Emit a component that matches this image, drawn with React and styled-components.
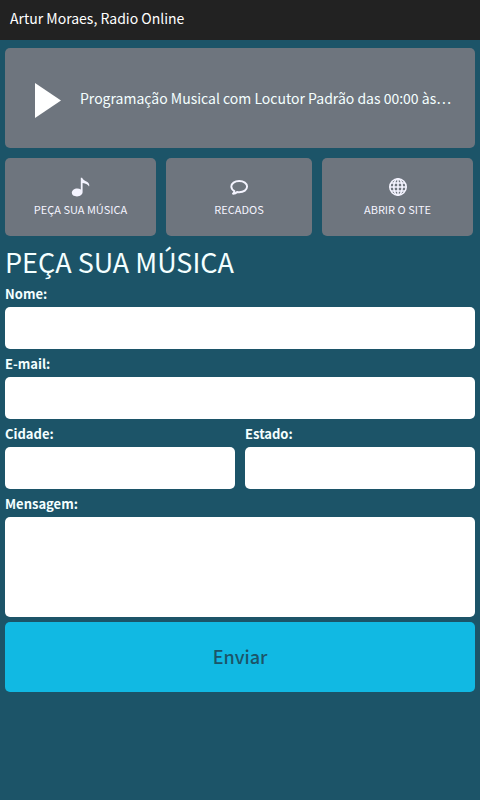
import React, { useState } from 'react';
import styled, { createGlobalStyle } from 'styled-components';

const App = () => {
  const [playing, setPlaying] = useState(false);

  return (
    <>
      <GlobalStyle />
      <TopBar>Artur Moraes, Radio Online</TopBar>
      <Main>
        <Player>
          <PlayButton
            type="button"
            aria-label={playing ? 'Pausar' : 'Tocar'}
            onClick={() => setPlaying(!playing)}
          >
            <svg width="26" height="35" viewBox="0 0 26 35" fill="currentColor">
              {playing ? <path d="M0 0h9v35H0zM17 0h9v35h-9z" /> : <path d="M0 0 26 17.500 0 35z" />}
            </svg>
          </PlayButton>
          <Program>Programação Musical com Locutor Padrão das 00:00 às…</Program>
        </Player>

        <Menu>
          <MenuLink href="#pedido">
            <NoteIcon />
            PEÇA SUA MÚSICA
          </MenuLink>
          <MenuLink href="#recados">
            <BubbleIcon />
            RECADOS
          </MenuLink>
          <MenuLink href="#site">
            <GlobeIcon />
            ABRIR O SITE
          </MenuLink>
        </Menu>

        <Title id="pedido">PEÇA SUA MÚSICA</Title>
        <Form onSubmit={(e) => e.preventDefault()}>
          <Field>
            <Label htmlFor="nome">Nome:</Label>
            <Input id="nome" type="text" />
          </Field>
          <Field>
            <Label htmlFor="email">E-mail:</Label>
            <Input id="email" type="email" />
          </Field>
          <Row>
            <Field>
              <Label htmlFor="cidade">Cidade:</Label>
              <Input id="cidade" type="text" />
            </Field>
            <Field>
              <Label htmlFor="estado">Estado:</Label>
              <Input id="estado" type="text" />
            </Field>
          </Row>
          <Field>
            <Label htmlFor="mensagem">Mensagem:</Label>
            <TextArea id="mensagem" />
          </Field>
          <Submit type="submit">Enviar</Submit>
        </Form>
      </Main>
    </>
  );
};

export default App;

const NoteIcon = () => (
  <Icon viewBox="0 0 20 20" aria-hidden="true">
    <path
      fill="currentColor"
      d="M9.800.8h1.300c.6 1.600 2 2.500 3.800 3.400 2.200 1.100 3.500 2.300 3.400 4.300 0 .4-.1.800-.3 1.100-.8-1.800-3-3.100-6.400-3.500V15c0 2.400-2.500 4.400-5.600 4.400C2.700 19.400.8 18 .8 15.800c0-2.300 2.300-4.300 5.500-4.300 1.400 0 2.600.3 3.500.9z"
    />
  </Icon>
);

const BubbleIcon = () => (
  <Icon viewBox="0 0 20 20" aria-hidden="true">
    <path
      fill="none"
      stroke="currentColor"
      strokeWidth="1.900"
      strokeLinejoin="round"
      d="M10.200 4C5.700 4 2.300 6.400 2.300 9.600c0 1.900 1.200 3.500 3.100 4.500 0 1.100-.6 1.800-1.400 2.600 1.900-.1 3.200-.7 4.100-1.700.7.100 1.400.2 2.100.2 4.500 0 7.900-2.400 7.900-5.600S14.700 4 10.200 4z"
    />
  </Icon>
);

const GlobeIcon = () => (
  <Icon viewBox="0 0 20 20" aria-hidden="true">
    <g fill="none" stroke="currentColor" strokeWidth="1.600">
      <circle cx="10" cy="10" r="8.200" />
      <ellipse cx="10" cy="10" rx="4.200" ry="8.200" />
      <path d="M10 1.800v16.400M1.800 10h16.400M3 6h14M3 14h14" />
    </g>
  </Icon>
);

const GlobalStyle = createGlobalStyle`
  * {
    box-sizing: border-box;
  }

  body {
    margin: 0;
    background: #1c5468;
    color: #f4ffff;
    font-family: 'Noto Sans CJK KR', 'Noto Sans', sans-serif;
  }
`;

const TopBar = styled.header`
  padding: 8px 10px 12px;
  background: #222;
  color: #fff;
  font-size: 14px;
  line-height: 20px;
`;

const Main = styled.main`
  padding: 8px 5px;
`;

const Player = styled.section`
  display: flex;
  align-items: center;
  min-height: 100px;
  padding: 0 10px 0 25px;
  border-radius: 5px;
  background: #6e757e;
`;

const PlayButton = styled.button`
  display: flex;
  flex: none;
  padding: 5px 14px 0 5px;
  border: 0;
  background: none;
  color: #fff;
  cursor: pointer;
`;

const Program = styled.p`
  flex: 1;
  min-width: 0;
  margin: 0 0 0 5px;
  overflow: hidden;
  font-size: 14px;
  line-height: 24px;
  text-overflow: ellipsis;
  white-space: nowrap;
`;

const Menu = styled.nav`
  display: grid;
  grid-template-columns: 151fr 146fr 151fr;
  gap: 10px;
  margin: 10px 2px 0 0;
`;

const MenuLink = styled.a`
  display: flex;
  flex-direction: column;
  align-items: center;
  gap: 4px;
  padding: 19px 5px;
  border-radius: 5px;
  background: #6e757e;
  color: #f4f4ff;
  font-size: 11px;
  line-height: 16px;
  text-decoration: none;
`;

const Icon = styled.svg`
  width: 20px;
  height: 20px;
`;

const Title = styled.h1`
  margin: 6px 0 2px;
  font-size: 27px;
  font-weight: 400;
  line-height: 40px;
`;

const Form = styled.form`
  display: flex;
  flex-direction: column;
  gap: 5px;
`;

const Row = styled.div`
  display: grid;
  grid-template-columns: 1fr 1fr;
  gap: 10px;
`;

const Field = styled.div`
  display: flex;
  flex-direction: column;
  min-width: 0;
`;

const Label = styled.label`
  padding-bottom: 3px;
  font-size: 13px;
  font-weight: 700;
  line-height: 20px;
`;

const Input = styled.input`
  width: 100%;
  height: 42px;
  padding: 10px;
  border: 0;
  border-radius: 5px;
  background: #fff;
  font: inherit;
`;

const TextArea = styled.textarea`
  display: block;
  width: 100%;
  height: 100px;
  padding: 10px;
  border: 0;
  border-radius: 5px;
  background: #fff;
  font: inherit;
  resize: none;
`;

const Submit = styled.button`
  height: 70px;
  padding: 0 10px 3px;
  border: 0;
  border-radius: 5px;
  background: #11b9e3;
  color: #1c5468;
  font-family: inherit;
  font-size: 18px;
  font-weight: 500;
  cursor: pointer;
`;
